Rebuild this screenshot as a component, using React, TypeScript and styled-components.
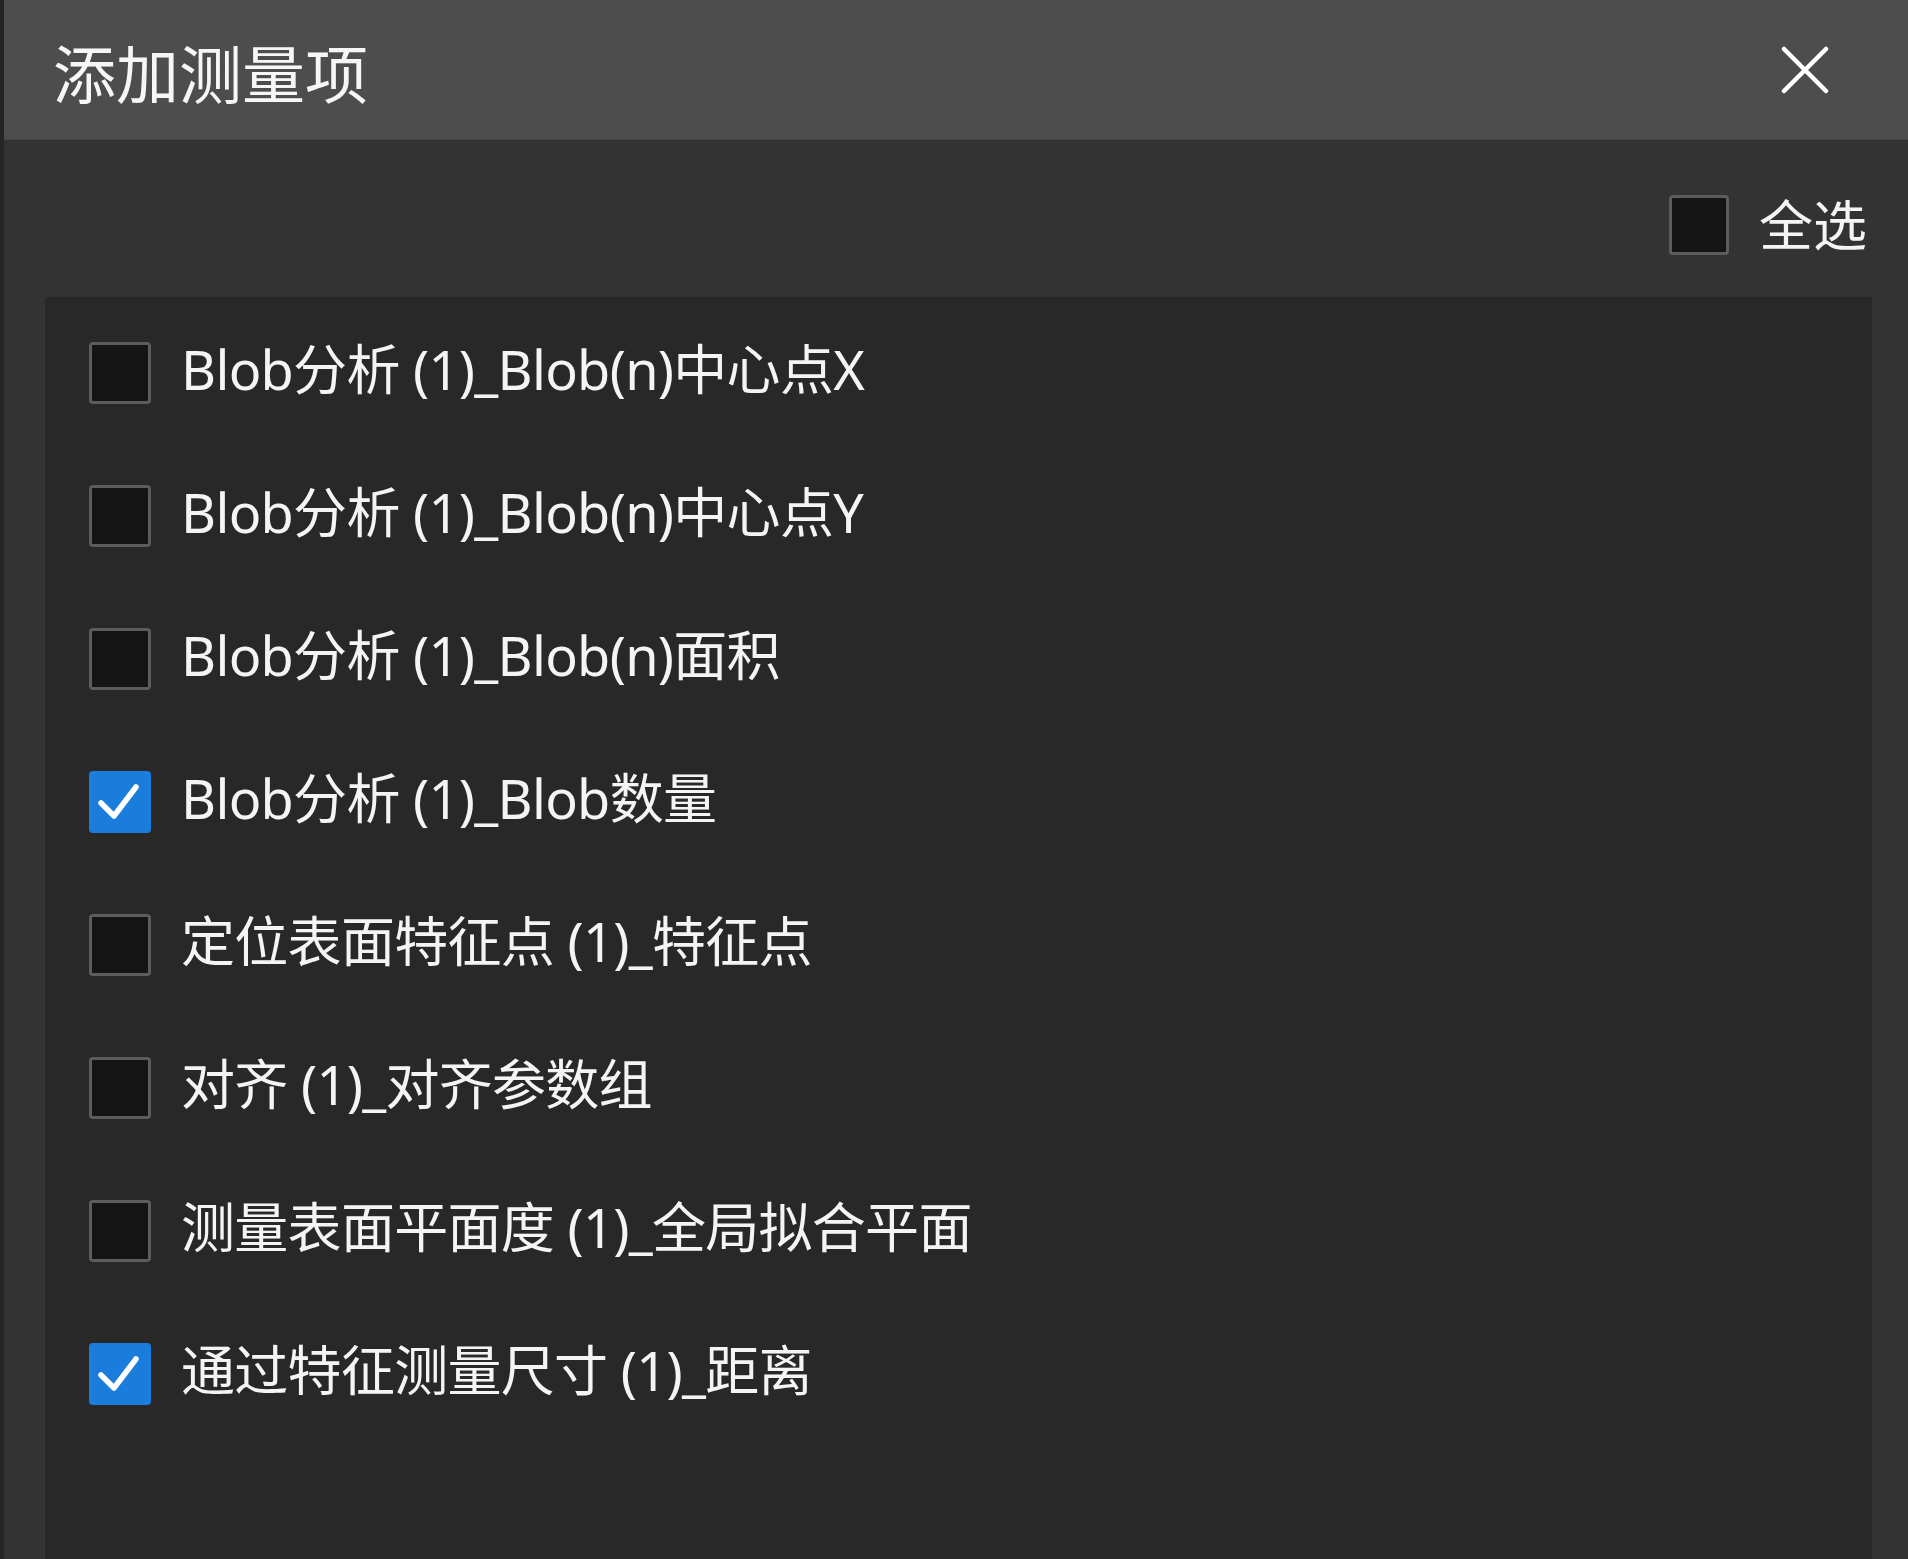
import styled, { createGlobalStyle } from 'styled-components';

const GlobalStyle = createGlobalStyle`
    html, body {
        margin: 0;
        padding: 0;
        background: #2a2a2a;
    }
    * {
        box-sizing: border-box;
    }
`;

const items = [
    { label: 'Blob分析 (1)_Blob(n)中心点X', checked: false },
    { label: 'Blob分析 (1)_Blob(n)中心点Y', checked: false },
    { label: 'Blob分析 (1)_Blob(n)面积', checked: false },
    { label: 'Blob分析 (1)_Blob数量', checked: true },
    { label: '定位表面特征点 (1)_特征点', checked: false },
    { label: '对齐 (1)_对齐参数组', checked: false },
    { label: '测量表面平面度 (1)_全局拟合平面', checked: false },
    { label: '通过特征测量尺寸 (1)_距离', checked: true },
];

const CheckIcon = () => (
    <svg width="62" height="62" viewBox="0 0 62 62">
        <path d="M12 32 L25 45 L47 16" fill="none" stroke="#fff" strokeWidth="5.5" strokeLinecap="round" strokeLinejoin="round" />
    </svg>
);

const CloseIcon = () => (
    <svg width="48" height="48" viewBox="0 0 48 48">
        <path d="M3 3 L45 45 M45 3 L3 45" fill="none" stroke="#fff" strokeWidth="4.5" strokeLinecap="round" />
    </svg>
);

const App = () => {
    return (
        <>
            <GlobalStyle />
            <Window>
                <TitleBar>
                    <Title>添加测量项</Title>
                    <CloseButton aria-label="关闭">
                        <CloseIcon />
                    </CloseButton>
                </TitleBar>

                <Body>
                    <SelectAllRow>
                        <Box checked={false} />
                        <Label>全选</Label>
                    </SelectAllRow>

                    <List>
                        {items.map(item => (
                            <Row key={item.label}>
                                <Box checked={item.checked}>
                                    {item.checked && <CheckIcon />}
                                </Box>
                                <ItemLabel>{item.label}</ItemLabel>
                            </Row>
                        ))}
                    </List>
                </Body>
            </Window>
        </>
    );
};

const Window = styled.div`
    display: flex;
    flex-direction: column;
    min-height: 1559px;
    border-left: 4px solid #252525;
    font-family: "Noto Sans", "Noto Sans CJK SC", sans-serif;
    color: #f4f4f4;
    overflow: hidden;
`;

const TitleBar = styled.header`
    display: flex;
    align-items: center;
    justify-content: space-between;
    height: 140px;
    padding: 0 79px 0 49px;
    background: #4d4d4d;
    border-bottom: 1px solid #444;
`;

const Title = styled.h1`
    margin: 8px 0 0;
    font-size: 63px;
    font-weight: 400;
    line-height: 1;
    color: #f6f6f6;
`;

const CloseButton = styled.button`
    display: flex;
    align-items: center;
    justify-content: center;
    padding: 0;
    border: 0;
    background: none;
    cursor: pointer;
`;

const Body = styled.main`
    flex: 1;
    display: flex;
    flex-direction: column;
    padding: 55px 36px 0 41px;
    background: #333333;
`;

const SelectAllRow = styled.div`
    display: flex;
    align-items: center;
    justify-content: flex-end;
    gap: 30px;
    height: 60px;
    padding-right: 5px;
    margin-bottom: 42px;

    & > div {
        width: 60px;
        height: 60px;
    }
`;

const List = styled.ul`
    flex: 1;
    display: flex;
    flex-direction: column;
    gap: 81px;
    margin: 0;
    padding: 45px 0 0 44px;
    list-style: none;
    background: #282828;
`;

const Row = styled.li`
    display: flex;
    align-items: center;
    gap: 30px;
    height: 62px;
`;

const Box = styled.div<{ checked: boolean }>`
    flex: none;
    display: flex;
    align-items: center;
    justify-content: center;
    width: 62px;
    height: 62px;
    border-radius: 4px;
    border: ${props => (props.checked ? 'none' : '3px solid #5c5c5c')};
    background: ${props => (props.checked ? '#1a7ddc' : '#151515')};
`;

const Label = styled.span`
    font-size: 54px;
    line-height: 1;
    white-space: nowrap;
    color: #f4f4f4;
`;

const ItemLabel = styled(Label)`
    margin-bottom: 8px;
    letter-spacing: -0.7px;
`;

export default App;
